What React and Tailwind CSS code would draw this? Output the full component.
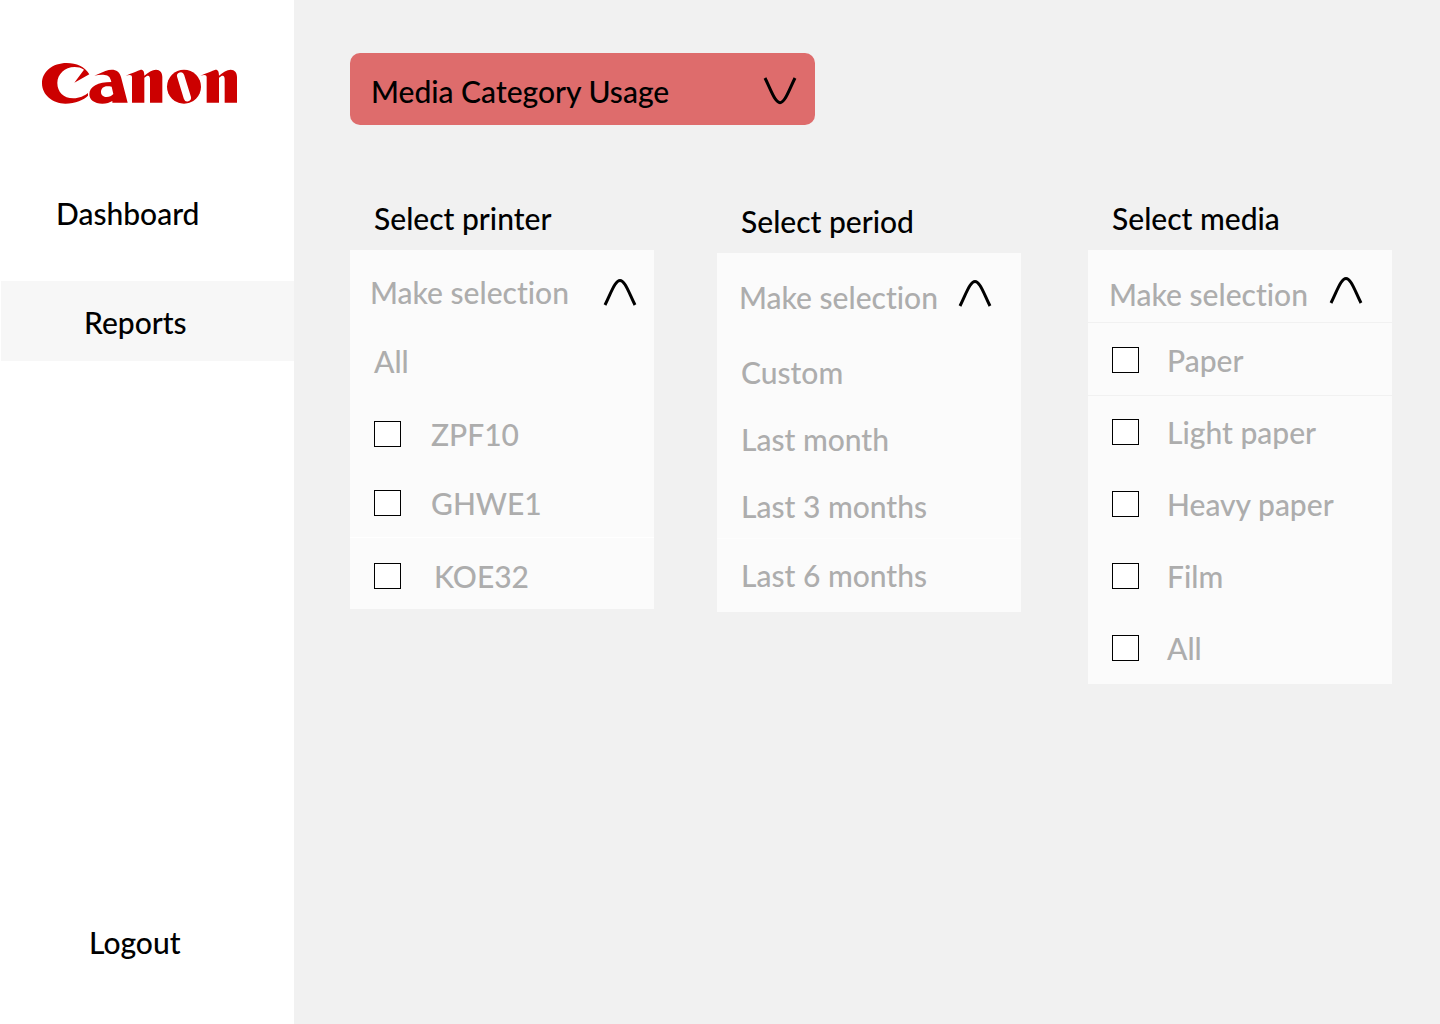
const N_PATH =
  "M251 38C271 30 287 23 296 20C304 19 307 26 307 38C318 28 331 20 342 20C354 20 361 29 361 42V119H324V48C324 37 318 34 307 44V119H270V43C270 35 264 34 251 38Z";

function Logo() {
  return (
    <svg viewBox="0 0 588 123" className="h-[41px] w-[196px]" fill="#cc0000" role="img" aria-label="Canon">
      <path d="M142 34C128 10 104 0 74 0C32 0 0 26 0 61C0 96 32 122 70 122C100 122 126 110 138 98V90C128 98 112 106 94 106C64 106 46 86 46 60C46 34 68 12 98 12C108 12 118 14 126 20L97 59Z" />
      <path
        fillRule="evenodd"
        d="M157 38L190 24C215 16 231 22 237 42L257 119H211V114C203 119 194 122 181 122C157 122 142 111 142 94C142 70 168 57 208 57C205 43 200 37 188 36C178 35 168 36 157 38ZM196 70C184 70 177 77 177 87C177 97 185 102 194 102C202 102 209 99 214 93L209 71C205 70 200 70 196 70Z"
      />
      <path d={N_PATH} />
      <circle cx="426" cy="71" r="51" />
      <path d="M416 39L436 104" stroke="#fff" strokeWidth="22" strokeLinecap="round" />
      <path d={N_PATH} transform="translate(224 0)" />
    </svg>
  );
}

function Chevron({ down = false }) {
  return (
    <svg
      viewBox="0 0 34 28"
      className={down ? "h-7 w-[34px] shrink-0 rotate-180" : "h-7 w-[34px] shrink-0"}
      fill="none"
      stroke="#000"
      strokeWidth="3"
      aria-hidden="true"
    >
      <path d="M2 27C6 19 9 11 12 6.500C15.500 1 18.500 1 22 6.500C25 11 28 19 32 27" />
    </svg>
  );
}

function Panel({ title, className, headClass, children }) {
  return (
    <section className={className}>
      <h2 className="mb-[14px] pl-6">{title}</h2>
      <div className="bg-[#fbfbfb] text-[#adadad]">
        <button type="button" aria-expanded="true" className={`flex w-full justify-between ${headClass}`}>
          <span className="whitespace-nowrap">Make selection</span>
          <Chevron />
        </button>
        {children}
      </div>
    </section>
  );
}

function CheckRow({ label, className }) {
  return (
    <label className={`flex items-center pl-6 ${className}`}>
      <input
        type="checkbox"
        className="h-[26px] w-[27px] shrink-0 appearance-none border border-black bg-white checked:bg-[#de6c6c]"
      />
      <span>{label}</span>
    </label>
  );
}

function Option({ label, className }) {
  return (
    <button type="button" className={`flex w-full items-center pb-0.5 pl-6 text-left ${className}`}>
      {label}
    </button>
  );
}

export default function App() {
  return (
    <div className="flex min-h-screen bg-[#f1f1f1] font-['Lato',sans-serif] text-[30px] font-medium leading-9 text-black [font-variant-ligatures:none]">
      <aside className="flex w-[294px] shrink-0 flex-col bg-white pb-16 pt-[63px]">
        <div className="pl-[42px]">
          <Logo />
        </div>
        <nav className="flex flex-1 flex-col pt-[70px]">
          <a href="#dashboard" className="flex h-20 items-center pb-0.5 pl-14">
            Dashboard
          </a>
          <a href="#reports" className="ml-px mt-[27px] flex h-20 items-center bg-[#f7f7f7] pl-[83px] pt-0.5" aria-current="page">
            Reports
          </a>
          <a href="#logout" className="mt-auto pl-[89px]">
            Logout
          </a>
        </nav>
      </aside>

      <main className="min-w-0 flex-1 pb-12 pl-14 pr-12 pt-[53px]">
        <button
          type="button"
          className="flex h-[72px] w-[465px] items-center justify-between rounded-[10px] bg-[#de6c6c] pl-[21px] pr-[18px] pt-1"
        >
          <span>Media Category Usage</span>
          <Chevron down />
        </button>

        <div className="flex items-start pt-[75px]">
          <Panel title="Select printer" className="flex-1" headClass="h-[76px] items-center pb-1 pl-5 pr-[17px] pt-3">
            <Option label="All" className="h-[72px]" />
            <CheckRow label="ZPF10" className="h-[71px] gap-[30px]" />
            <CheckRow label="GHWE1" className="h-[69px] gap-[30px] border-b border-white" />
            <CheckRow label="KOE32" className="h-[71px] gap-[33px] pt-1" />
          </Panel>

          <Panel title="Select period" className="ml-[63px] flex-1 pt-[3px]" headClass="h-[88px] pl-[22px] pr-[29px] pt-[26px]">
            <Option label="Custom" className="h-16" />
            <Option label="Last month" className="h-[70px]" />
            <Option label="Last 3 months" className="h-16 border-b border-[#fdfdfd]" />
            <Option label="Last 6 months" className="h-[73px]" />
          </Panel>

          <Panel title="Select media" className="ml-[67px] flex-1" headClass="h-[73px] border-b border-[#f1f1f1] pl-[21px] pr-[29px] pt-[26px]">
            <CheckRow label="Paper" className="h-[73px] gap-7 border-b border-[#f1f1f1] pt-0.5" />
            <CheckRow label="Light paper" className="h-[72px] gap-7" />
            <CheckRow label="Heavy paper" className="h-[72px] gap-7" />
            <CheckRow label="Film" className="h-[72px] gap-7" />
            <CheckRow label="All" className="h-[72px] gap-7" />
          </Panel>
        </div>
      </main>
    </div>
  );
}
